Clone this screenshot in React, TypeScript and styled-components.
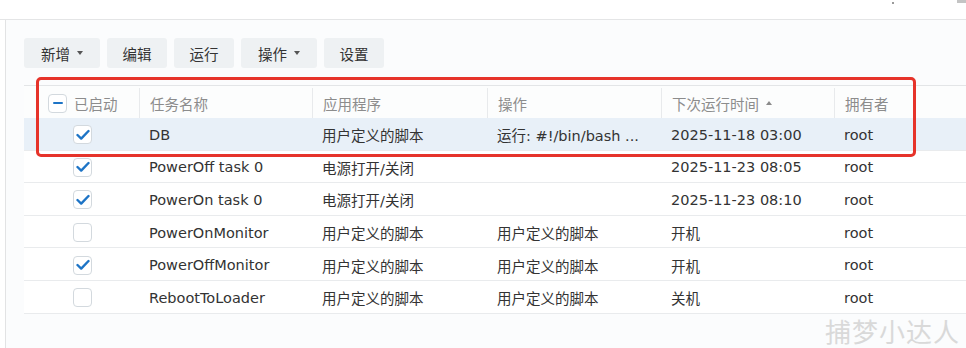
import React from "react";
import styled, { createGlobalStyle } from "styled-components";

const Global = createGlobalStyle`
  html, body { margin: 0; padding: 0; background: #ffffff; }
  body { font-family: "DejaVu Sans", "Noto Sans CJK SC", sans-serif; }
  * { box-sizing: border-box; }
`;

const Page = styled.div`
  position: relative;
  width: 966px;
  height: 348px;
  overflow: hidden;
  display: flex;
  flex-direction: column;
  background: #ffffff;
`;

const TopBar = styled.div`
  height: 20px;
  flex: none;
  border-bottom: 1px solid #e4e5e6;
  background: #ffffff;
  display: flex;
  justify-content: flex-end;
  align-items: flex-start;
`;

const TopDot = styled.span`
  width: 2px;
  height: 2px;
  margin-top: 2px;
  margin-right: 63px;
  background: #9a9a9a;
`;

const TopBarEdge = styled.span`
  width: 9px;
  height: 3px;
  background: #c4c4c4;
`;

const Body = styled.div`
  flex: 1;
  display: flex;
`;

const Rail = styled.div`
  width: 6px;
  flex: none;
  border-right: 1px solid #e2e3e4;
  background: #ffffff;
`;

const Content = styled.div`
  flex: 1;
  background: #fbfcfd;
  padding: 18px 0 0 18px;
  display: flex;
  flex-direction: column;
`;

const Toolbar = styled.div`
  display: flex;
  gap: 7px;
  height: 30px;
`;

const ToolButton = styled.div<{ $w: number }>`
  width: ${(p) => p.$w}px;
  height: 30px;
  border-radius: 3px;
  background: #eef1f3;
  color: #333333;
  font-size: 14.5px;
  display: flex;
  align-items: center;
  justify-content: center;
  gap: 7px;
`;

const Caret = styled.span`
  width: 0;
  height: 0;
  border-left: 3.5px solid transparent;
  border-right: 3.5px solid transparent;
  border-top: 4px solid #555;
`;

const Table = styled.div`
  margin-top: 17px;
  border-top: 1px solid #e3e5e7;
`;

const cols = "115px 173px 175px 174px 173px 1fr";

const HeaderRow = styled.div`
  display: grid;
  grid-template-columns: ${cols};
  height: 32px;
  background: #fcfdfd;
`;

const HeadCell = styled.div<{ $first?: boolean }>`
  display: flex;
  align-items: center;
  padding-left: ${(p) => (p.$first ? "24px" : "10px")};
  gap: 7px;
  color: #8c8c8c;
  font-size: 14.5px;
  border-left: ${(p) => (p.$first ? "none" : "1px solid #e8eaec")};
  margin: 2px 0 0;
`;

const SortArrow = styled.span`
  width: 0;
  height: 0;
  border-left: 3.5px solid transparent;
  border-right: 3.5px solid transparent;
  border-bottom: 4px solid #8a8a8a;
`;

const Row = styled.div<{ $selected?: boolean }>`
  display: grid;
  grid-template-columns: ${cols};
  height: 32.6px;
  border-bottom: 1px solid #e9ebed;
  background: ${(p) => (p.$selected ? "#e8f0f8" : "#ffffff")};
`;

const Cell = styled.div<{ $check?: boolean }>`
  display: flex;
  align-items: center;
  padding-left: ${(p) => (p.$check ? "49px" : "10px")};
  padding-top: 2px;
  color: #333333;
  font-size: 14.5px;
  white-space: nowrap;
  overflow: hidden;
`;

const Box = styled.span`
  width: 19px;
  height: 19px;
  border: 1px solid #d3d9de;
  border-radius: 4px;
  background: #ffffff;
  display: flex;
  align-items: center;
  justify-content: center;
  flex: none;
`;

const Minus = styled.span`
  width: 10px;
  height: 2.5px;
  border-radius: 1px;
  background: #1d74c6;
`;

const RedFrame = styled.div`
  position: absolute;
  left: 36px;
  top: 77px;
  width: 880px;
  height: 80px;
  border: 3px solid #e6332a;
  border-radius: 5px;
  pointer-events: none;
`;

const Watermark = styled.div`
  position: absolute;
  right: 6px;
  bottom: -1px;
  font-family: "Noto Sans CJK SC", sans-serif;
  font-size: 26px;
  letter-spacing: 1px;
  color: #d9d9d9;
`;

const Check = () => (
  <svg width="14" height="12" viewBox="0 0 14 12">
    <polyline
      points="1.5,6 5.2,9.6 12.5,2"
      fill="none"
      stroke="#1d74c6"
      strokeWidth="2.4"
      strokeLinecap="round"
      strokeLinejoin="round"
    />
  </svg>
);

const rows = [
  { on: true, name: "DB", app: "用户定义的脚本", op: "运行: #!/bin/bash ...", next: "2025-11-18 03:00", owner: "root", sel: true },
  { on: true, name: "PowerOff task 0", app: "电源打开/关闭", op: "", next: "2025-11-23 08:05", owner: "root" },
  { on: true, name: "PowerOn task 0", app: "电源打开/关闭", op: "", next: "2025-11-23 08:10", owner: "root" },
  { on: false, name: "PowerOnMonitor", app: "用户定义的脚本", op: "用户定义的脚本", next: "开机", owner: "root" },
  { on: true, name: "PowerOffMonitor", app: "用户定义的脚本", op: "用户定义的脚本", next: "开机", owner: "root" },
  { on: false, name: "RebootToLoader", app: "用户定义的脚本", op: "用户定义的脚本", next: "关机", owner: "root" },
];

export default function App() {
  return (
    <Page>
      <Global />
      <TopBar>
        <TopDot />
        <TopBarEdge />
      </TopBar>
      <Body>
        <Rail />
        <Content>
          <Toolbar>
            <ToolButton $w={76}>
              新增<Caret />
            </ToolButton>
            <ToolButton $w={60}>编辑</ToolButton>
            <ToolButton $w={60}>运行</ToolButton>
            <ToolButton $w={76}>
              操作<Caret />
            </ToolButton>
            <ToolButton $w={60}>设置</ToolButton>
          </Toolbar>
          <Table>
            <HeaderRow>
              <HeadCell $first>
                <Box>
                  <Minus />
                </Box>
                已启动
              </HeadCell>
              <HeadCell>任务名称</HeadCell>
              <HeadCell>应用程序</HeadCell>
              <HeadCell>操作</HeadCell>
              <HeadCell>
                下次运行时间<SortArrow />
              </HeadCell>
              <HeadCell>拥有者</HeadCell>
            </HeaderRow>
            {rows.map((r) => (
              <Row key={r.name} $selected={r.sel}>
                <Cell $check>
                  <Box>{r.on ? <Check /> : null}</Box>
                </Cell>
                <Cell>{r.name}</Cell>
                <Cell>{r.app}</Cell>
                <Cell>{r.op}</Cell>
                <Cell>{r.next}</Cell>
                <Cell>{r.owner}</Cell>
              </Row>
            ))}
          </Table>
        </Content>
      </Body>
      <RedFrame />
      <Watermark>捕梦小达人</Watermark>
    </Page>
  );
}
